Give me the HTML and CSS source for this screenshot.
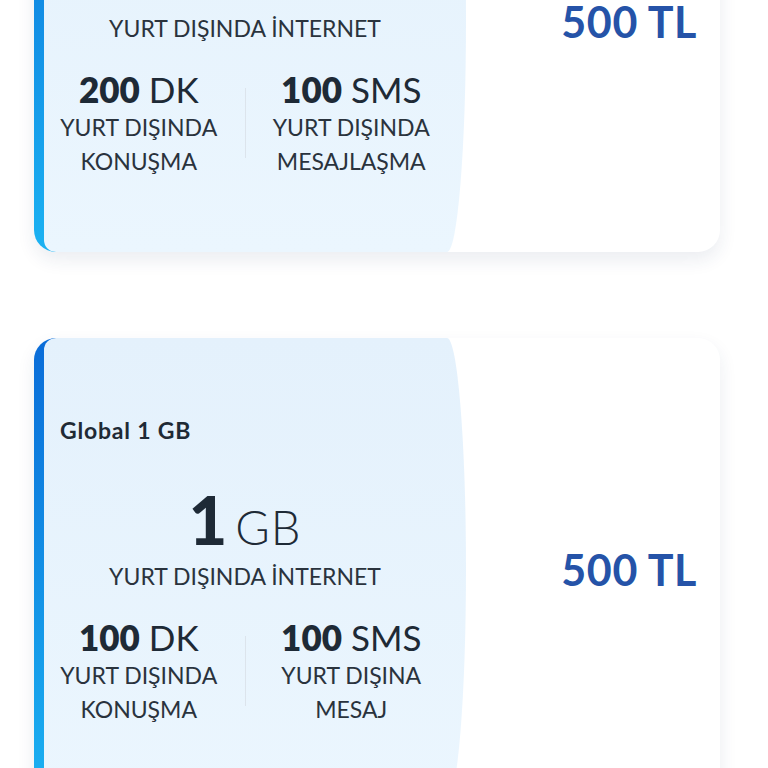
FILE: index.html
```html
<!DOCTYPE html>
<html lang="tr">
  <head>
    <meta charset="UTF-8" />
    <meta name="viewport" content="width=device-width, initial-scale=1.0" />
    <title>Yurt Dışı Paketleri</title>
    <link rel="stylesheet" href="styles.css">
  </head>
  <body>
    <div class="offer-list">
      <div class="offer-card">
        <div class="offer-info">
          <div class="offer-panel">
            <div class="offer-title">Global 3 GB</div>
            <div class="offer-data">
              <span class="amount">3</span><span class="unit">GB</span>
            </div>
            <div class="offer-data-label">YURT DIŞINDA İNTERNET</div>
            <div class="offer-stats">
              <div class="stat">
                <div class="stat-value"><b>200</b> DK</div>
                <div class="stat-label">YURT DIŞINDA<br />KONUŞMA</div>
              </div>
              <div class="stat-divider"></div>
              <div class="stat">
                <div class="stat-value"><b>100</b> SMS</div>
                <div class="stat-label">YURT DIŞINDA<br />MESAJLAŞMA</div>
              </div>
            </div>
          </div>
        </div>
        <div class="offer-price">500 TL</div>
      </div>

      <div class="offer-card">
        <div class="offer-info">
          <div class="offer-panel">
            <div class="offer-title">Global 1 GB</div>
            <div class="offer-data">
              <span class="amount">1</span><span class="unit">GB</span>
            </div>
            <div class="offer-data-label">YURT DIŞINDA İNTERNET</div>
            <div class="offer-stats">
              <div class="stat">
                <div class="stat-value"><b>100</b> DK</div>
                <div class="stat-label">YURT DIŞINDA<br />KONUŞMA</div>
              </div>
              <div class="stat-divider"></div>
              <div class="stat">
                <div class="stat-value"><b>100</b> SMS</div>
                <div class="stat-label">YURT DIŞINA<br />MESAJ</div>
              </div>
            </div>
          </div>
        </div>
        <div class="offer-price">500 TL</div>
      </div>
    </div>
  </body>
</html>
```

FILE: styles.css
```css
* {
  margin: 0;
  padding: 0;
  box-sizing: border-box;
}

body {
  font-family: Lato, "Noto Sans", sans-serif;
  background: #ffffff;
  color: #1e2a36;
  overflow: hidden;
}

/* list is scrolled: first card starts above the viewport */
.offer-list {
  display: flex;
  flex-direction: column;
  gap: 86px;
  margin-top: -210px;
  padding: 0 48px 40px 34px;
}

.offer-card {
  display: flex;
  background: #ffffff;
  border-radius: 22px;
  overflow: hidden;
  box-shadow: 0 8px 18px rgba(30, 60, 100, 0.09);
}

.offer-info {
  display: flex;
  flex: none;
  background: linear-gradient(180deg, #0a6cd8 0%, #1bb2f2 100%) left / 24px
    100% no-repeat;
}

.offer-panel {
  width: 422px;
  margin-left: 10px;
  padding: 78px 20px 74px 0;
  background: linear-gradient(180deg, #e4f1fc 0%, #ebf6fe 100%);
  border-radius: 12px 19px 19px 12px / 12px 50% 50% 12px;
  text-align: center;
}

.offer-title {
  margin-left: 16px;
  text-align: left;
  font-size: 23px;
  line-height: 28px;
  font-weight: 700;
  letter-spacing: 0.8px;
  color: #1f2a35;
}

.offer-data {
  margin-top: 40px;
  font-size: 67px;
  line-height: 70px;
  color: #1e2a36;
}

.offer-data .amount {
  font-weight: 900;
}

.offer-data .unit {
  margin-left: 8px;
  font-size: 47px;
  line-height: 1;
  font-weight: 300;
  letter-spacing: 1px;
}

.offer-data-label {
  margin-top: 8px;
  font-size: 23px;
  line-height: 28px;
  color: #2a333d;
}

.offer-stats {
  display: flex;
  align-items: center;
  margin: 26px -11px 0;
}

.stat {
  flex: 1;
}

.stat-value {
  font-size: 35px;
  line-height: 42px;
  color: #1e2a36;
}

.stat-value b {
  font-weight: 800;
}

.stat-label {
  font-size: 23px;
  line-height: 34px;
  color: #2a333d;
}

.stat-divider {
  width: 1px;
  height: 70px;
  background: #dce4ec;
}

.offer-price {
  flex: 1;
  display: flex;
  align-items: center;
  justify-content: flex-end;
  padding-right: 23px;
  font-size: 43px;
  font-weight: 700;
  letter-spacing: 0.6px;
  color: #2553a8;
}
```
